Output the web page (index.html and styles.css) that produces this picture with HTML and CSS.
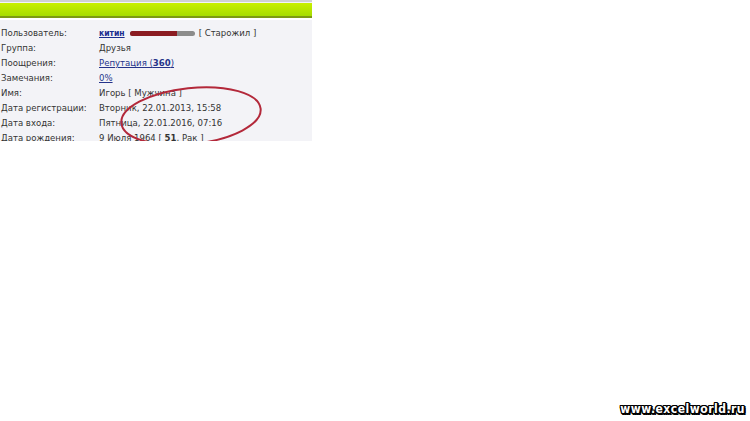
FILE: index.html
```html
<!DOCTYPE html>
<html lang="ru">
<head>
    <meta charset="UTF-8">
    <title>Профиль</title>
    <link rel="stylesheet" href="styles.css">
</head>
<body>
    <div class="profile">
        <div class="topbar"></div>
        <div class="info">
            <div class="label">Пользователь:</div>
            <div class="value">
                <a class="user" href="#">китин</a><span class="rank-bar"><span class="rank-fill"></span></span>[ Старожил ]
            </div>

            <div class="label">Группа:</div>
            <div class="value">Друзья</div>

            <div class="label">Поощрения:</div>
            <div class="value"><a href="#">Репутация (<b>360</b>)</a></div>

            <div class="label">Замечания:</div>
            <div class="value"><a href="#">0%</a></div>

            <div class="label">Имя:</div>
            <div class="value">Игорь [ Мужчина ]</div>

            <div class="label">Дата регистрации:</div>
            <div class="value">Вторник, 22.01.2013, 15:58</div>

            <div class="label">Дата входа:</div>
            <div class="value">Пятница, 22.01.2016, 07:16</div>

            <div class="label">Дата рождения:</div>
            <div class="value">9 Июля 1964 [ <b>51</b>, Рак ]</div>
        </div>

        <svg class="circle" width="150" height="70" viewBox="0 0 150 70">
            <ellipse cx="75" cy="34" rx="70" ry="28" transform="rotate(-6 75 34)"
                     fill="none" stroke="#b3283a" stroke-width="2"/>
        </svg>
    </div>

    <div class="watermark">www.excelworld.ru</div>
</body>
</html>
```

FILE: styles.css
```css
body {
    margin: 0;
    padding: 0;
    background-color: #fff;
    font-family: 'DejaVu Sans Condensed', 'DejaVu Sans', sans-serif;
    width: 750px;
    height: 421px;
    position: relative;
    overflow: hidden;
}

.profile {
    position: relative;
    width: 312px;
    height: 141px;
    border-top: 2px solid #cfd0d2;
    box-sizing: border-box;
    background-color: #f3f3f7;
    overflow: hidden;
}

.topbar {
    height: 13px;
    margin-top: 1px;
    background: linear-gradient(#c8f000, #a6dc00);
    border-bottom: 2px solid #7d9a12;
    box-shadow: 0 2px 0 #fff;
}

.info {
    display: grid;
    grid-template-columns: 98px 1fr;
    grid-auto-rows: 15px;
    padding-top: 7px;
    padding-left: 1px;
    font-size: 9.5px;
    color: #333;
    line-height: 15px;
}

.label,
.value {
    white-space: nowrap;
}

.info a {
    color: #25338a;
}

.info a.user {
    font-size: 8.5px;
    font-weight: bold;
    color: #1b2d8f;
}

.rank-bar {
    display: inline-block;
    width: 65px;
    height: 5px;
    margin: 0 4px 1px 5px;
    border-radius: 3px;
    background-color: #8c8c8c;
    overflow: hidden;
    vertical-align: middle;
}

.rank-fill {
    display: block;
    width: 47px;
    height: 100%;
    background-color: #8b1c22;
}

.circle {
    position: absolute;
    left: 116px;
    top: 80px;
}

.watermark {
    position: absolute;
    right: 5px;
    bottom: 5px;
    font-family: 'DejaVu Sans Condensed', 'DejaVu Sans', sans-serif;
    font-size: 12px;
    font-weight: bold;
    letter-spacing: 0.5px;
    color: #fff;
    text-shadow: 1px 0 0 #000, -1px 0 0 #000, 0 1px 0 #000, 0 -1px 0 #000,
                 1px 1px 0 #000, -1px -1px 0 #000, 1px -1px 0 #000, -1px 1px 0 #000,
                 2px 0 0 #000, 0 2px 0 #000, 2px 2px 0 #000;
}
```
